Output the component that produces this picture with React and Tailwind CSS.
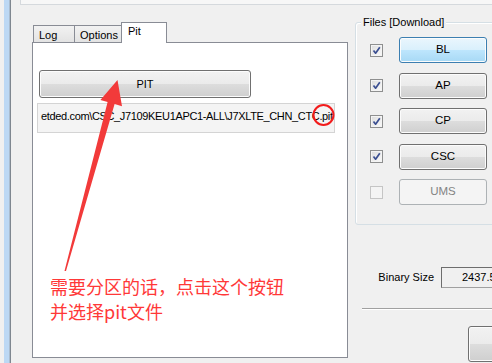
import React from "react";

const btnNormal =
  "border border-[#707070] rounded-[3px] bg-[linear-gradient(to_bottom,#f2f2f2_0%,#ebebeb_50%,#dddddd_50%,#cfcfcf_100%)] shadow-[inset_0_0_0_1px_#fcfcfc] text-black";
const btnFocus =
  "border border-[#3c7fb1] rounded-[3px] bg-[linear-gradient(to_bottom,#eaf6fd_0%,#d9f0fc_50%,#bee6fd_50%,#a7d9f5_100%)] shadow-[inset_0_0_0_1px_#fcfcfc] text-black";
const btnDisabled =
  "border border-[#adb2b5] rounded-[3px] bg-[#f4f4f4] text-[#838383]";

function Check({ checked, disabled }) {
  return (
    <div
      className={
        "w-[13px] h-[13px] border flex items-center justify-center " +
        (disabled
          ? "border-[#c5c5c5] bg-[#f4f4f4]"
          : "border-[#8e8f8f] bg-[linear-gradient(135deg,#dcdcdc,#fbfbfb)] shadow-[inset_0_0_0_1px_#f4f4f4]")
      }
    >
      {checked && (
        <svg width="11" height="11" viewBox="0 0 11 11">
          <path
            d="M2.5 5.5 L4.6 8.2 L8.8 2.2"
            fill="none"
            stroke="#3b4f91"
            strokeWidth="1.7"
            strokeLinejoin="round"
          />
        </svg>
      )}
    </div>
  );
}

function Row({ label, checked, focus, disabled }) {
  return (
    <div className="flex items-center shrink-0">
      <div className="ml-[14px]">
        <Check checked={checked} disabled={disabled} />
      </div>
      <div
        className={
          "ml-[16px] w-[88px] h-[26px] flex items-center justify-center text-[11.5px] " +
          (disabled ? btnDisabled : focus ? btnFocus : btnNormal)
        }
      >
        {label}
      </div>
    </div>
  );
}

export default function App() {
  return (
    <div
      className="w-[492px] h-[363px] bg-[#f0f0f0] relative overflow-hidden flex items-start text-[11px] text-black"
      style={{ fontFamily: '"Liberation Sans", Arial, sans-serif' }}
    >
      <div className="w-[4px] h-[363px] shrink-0 bg-[#f0f0f0]" />
      <div className="w-[5px] h-[363px] shrink-0 bg-[#bcd8f4]" />
      <div className="w-[1px] h-[363px] shrink-0 bg-[#a9bccf]" />
      <div className="w-[1px] h-[363px] shrink-0 bg-[#7f8790]" />
      <div className="flex-1 flex flex-col min-w-0">
        <div className="h-[5px] shrink-0 ml-[9px] border-l border-b border-[#d5d9dd] bg-[#f7f7f7]" />
        <div className="flex items-start mt-[17px] shrink-0">
          {/* Left tab control */}
          <div className="ml-[21px] w-[316px] flex flex-col shrink-0">
            <div className="flex items-end h-[20px] relative z-10 shrink-0">
              <div className="ml-[1px] w-[42px] h-[17px] border border-b-0 border-[#898c95] bg-[linear-gradient(to_bottom,#f2f2f2,#e3e3e3)] pl-[5px] pt-[3px] leading-[13px]">
                Log
              </div>
              <div className="w-[47px] h-[17px] border border-b-0 border-l-0 border-[#898c95] bg-[linear-gradient(to_bottom,#f2f2f2,#e3e3e3)] pl-[5px] pt-[3px] leading-[13px]">
                Options
              </div>
              <div className="w-[46px] h-[21px] -mb-px border border-b-0 border-[#898c95] bg-white pl-[6px] pt-[2px] leading-[13px] -ml-px">
                Pit
              </div>
            </div>
            <div className="h-[316px] shrink-0 border border-[#898c95] bg-white flex flex-col">
              <div
                className={
                  "mt-[27px] ml-[6px] w-[212px] h-[28px] shrink-0 flex items-center justify-center " +
                  btnNormal
                }
              >
                PIT
              </div>
              <div className="mt-[5px] ml-[4px] w-[298px] h-[30px] shrink-0 border border-[#d4d4d4] bg-[#f4f4f4] pl-[3px] pt-[5px] whitespace-nowrap leading-[14px] text-[11px] tracking-[-0.35px]">
                etded.com\CSC_J7109KEU1APC1-ALL\J7XLTE_CHN_CTC.pit
              </div>
            </div>
          </div>

          {/* Right column */}
          <div className="flex-1 flex flex-col min-w-0">
            <div className="ml-[7px] w-[150px] shrink-0 relative border border-[#d5dfe5] rounded-[3px] shadow-[inset_1px_1px_0_#ffffff] pt-[14px] pb-[19px] flex flex-col gap-[9.5px]">
              <div className="absolute -top-[7px] left-[5px] px-[2px] bg-[#f0f0f0] leading-[13px] whitespace-nowrap">
                Files [Download]
              </div>
              <Row label="BL" checked focus />
              <Row label="AP" checked />
              <Row label="CP" checked />
              <Row label="CSC" checked />
              <Row label="UMS" disabled />
            </div>
            <div className="mt-[42px] flex items-center shrink-0">
              <div className="w-[86px] shrink-0 text-right whitespace-nowrap">Binary Size</div>
              <div className="ml-[7px] w-[80px] h-[21px] border border-[#a0a0a0] border-t-[#6d6d6d] border-l-[#6d6d6d] bg-[#f0f0f0] pl-[20px] flex items-center whitespace-nowrap shrink-0">
                2437.5 MB
              </div>
            </div>
            <div className="mt-[20px] ml-[14px] w-[200px] shrink-0 h-px bg-[#a0a0a0] border-b border-white box-content" />
            <div
              className={
                "mt-[16px] ml-[120px] w-[70px] h-[36px] shrink-0 " + btnNormal
              }
            />
          </div>
        </div>
      </div>

      {/* Annotation overlay */}
      <svg
        className="absolute inset-0 pointer-events-none"
        width="492"
        height="363"
        viewBox="0 0 492 363"
      >
        <polygon
          points="64.5,271 107.6,102.1 100.4,100 117.5,80 122,106.2 114.6,104 66,271"
          fill="#f23a3a"
        />
        <circle cx="323.5" cy="115" r="10" fill="none" stroke="#f21c1c" strokeWidth="2" />
      </svg>
      <div
        className="absolute left-[50px] top-[274px] text-[18px] leading-[25px] text-[#ff3838] whitespace-nowrap"
        style={{ fontFamily: '"Noto Sans CJK SC", "Noto Sans", sans-serif' }}
      >
        <div>需要分区的话，点击这个按钮</div>
        <div>并选择pit文件</div>
      </div>
    </div>
  );
}
